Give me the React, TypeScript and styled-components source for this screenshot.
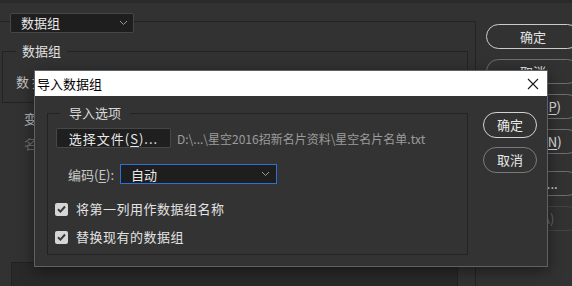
import styled, { createGlobalStyle } from 'styled-components'

const GlobalStyle = createGlobalStyle`
  body {
    margin: 0;
    background: #323232;
    font-family: "Noto Sans CJK SC", "Noto Sans", sans-serif;
  }
`

const Screen = styled.div`
  position: relative;
  width: 572px;
  height: 286px;
  overflow: hidden;
  box-sizing: border-box;
  background: #323232;
  border-top: 3px solid #2a2a2a;
  display: flex;
  gap: 10px;
  font-size: 13px;
  color: #e2e2e2;
`

const OuterFrame = styled.fieldset`
  margin: 6px 0 0 -1px;
  padding: 9px 0 0 2px;
  width: 477px;
  min-width: 0;
  height: 330px;
  flex: none;
  box-sizing: border-box;
  border: 1px solid #232323;
`

const DropLegend = styled.legend`
  margin-left: 8px;
  padding: 4px 0 0;
`

const Dropdown = styled.div`
  width: 124px;
  height: 20px;
  box-sizing: border-box;
  display: flex;
  align-items: center;
  justify-content: space-between;
  padding: 0 5px 0 10px;
  background: #1e1e1e;
  border: 1px solid #464646;
  border-radius: 2px;
  line-height: 18px;
  color: #e8e8e8;
`

const InnerFrame = styled.fieldset`
  margin: 0;
  padding: 13px 0 11px 13px;
  width: 466px;
  min-width: 0;
  box-sizing: border-box;
  border: 1px solid #232323;
`

const TextLegend = styled.legend<{ $pad: number }>`
  padding: 0 ${(p) => p.$pad}px;
  line-height: 18px;
  color: #e0e0e0;
`

const BgRow = styled.div<{ $indent: number; $dim?: boolean; $top?: number }>`
  height: 18px;
  line-height: 18px;
  margin-top: ${(p) => p.$top ?? 0}px;
  padding-left: ${(p) => p.$indent}px;
  color: ${(p) => (p.$dim ? '#6c6c6c' : '#c4c4c4')};
  letter-spacing: 3px;
  white-space: nowrap;
`

const BottomPanel = styled.div`
  margin: 109px 0 0 9px;
  width: 447px;
  height: 60px;
  box-sizing: border-box;
  background: #292929;
  border: 1px solid #222;
`

const SideColumn = styled.div`
  display: flex;
  flex-direction: column;
  gap: 10px;
  padding-top: 21px;
  flex: none;
`

const Pill = styled.div<{ $variant?: 'default' | 'normal' | 'disabled'; $extra?: number }>`
  width: 94px;
  height: 25px;
  box-sizing: border-box;
  margin-top: ${(p) => p.$extra ?? 0}px;
  border-radius: 13px;
  border: 1px solid
    ${(p) => (p.$variant === 'default' ? '#cbcbcb' : p.$variant === 'disabled' ? '#444' : '#6f6f6f')};
  color: ${(p) => (p.$variant === 'disabled' ? '#666' : '#e2e2e2')};
  display: flex;
  align-items: center;
  justify-content: center;
  line-height: 18px;
  white-space: nowrap;
`

const SideText = styled.div`
  margin-top: 2px;
  padding-left: 12px;
  line-height: 18px;
  color: #d0d0d0;
`

const Key = styled.span`
  text-decoration: underline;
  text-underline-offset: 2px;
`

/* dialog */

const Dialog = styled.div`
  position: absolute;
  left: 34px;
  top: 67px;
  width: 514px;
  height: 197px;
  box-sizing: border-box;
  border: 1px solid #5d6267;
  background: #333;
  box-shadow: 0 4px 14px rgba(0, 0, 0, 0.45);
`

const TitleBar = styled.div`
  height: 25px;
  background: #fff;
  color: #000;
  display: flex;
  align-items: center;
  justify-content: space-between;
  padding: 0 8px 0 2px;
  line-height: 18px;
`

const DialogBody = styled.div`
  display: flex;
  gap: 15px;
  padding: 8px 0 0 12px;
`

const OptionsFrame = styled.fieldset`
  margin: 0;
  padding: 6px 8px 0 8px;
  width: 421px;
  height: 151px;
  min-width: 0;
  box-sizing: border-box;
  border: 1px solid #232323;
`

const OptionsLegend = styled.legend`
  margin-left: 4px;
  padding: 0 9px;
  line-height: 18px;
  color: #d8d8d8;
`

const Row = styled.div<{ $top?: number }>`
  display: flex;
  align-items: center;
  margin-top: ${(p) => p.$top ?? 0}px;
`

const FileButton = styled.div`
  width: 115px;
  height: 20px;
  box-sizing: border-box;
  display: flex;
  align-items: center;
  justify-content: center;
  background: #1f1f1f;
  border: 1px solid #474747;
  border-radius: 2px;
  color: #e8e8e8;
  letter-spacing: 1px;
`

const PathText = styled.span`
  margin-left: 6px;
  font-size: 12px;
  color: #9c9c9c;
  white-space: nowrap;
`

const FieldLabel = styled.span`
  width: 52px;
  margin-left: 12px;
  color: #c8c8c8;
  white-space: nowrap;
`

const Select = styled.div`
  width: 157px;
  height: 20px;
  box-sizing: border-box;
  display: flex;
  align-items: center;
  justify-content: space-between;
  padding: 0 6px 0 10px;
  background: #1e1e1e;
  border: 1px solid #2f6fd8;
  color: #e8e8e8;
`

const CheckBox = styled.span`
  width: 13px;
  height: 13px;
  border-radius: 2px;
  background: #d6d6d6;
  display: flex;
  align-items: center;
  justify-content: center;
  margin-right: 8px;
  margin-left: -1px;
`

const CheckLabel = styled.span`
  line-height: 18px;
  color: #e2e2e2;
  letter-spacing: 0.5px;
`

const DialogButtons = styled.div`
  display: flex;
  flex-direction: column;
  gap: 9px;
  padding-top: 8px;
`

const RoundButton = styled.div<{ $primary?: boolean }>`
  width: 54px;
  height: 26px;
  box-sizing: border-box;
  border-radius: 13px;
  border: 1px solid ${(p) => (p.$primary ? '#d2d2d2' : '#7a7a7a')};
  display: flex;
  align-items: center;
  justify-content: center;
  color: #e8e8e8;
  line-height: 18px;
`

const Chevron = () => (
  <svg width="9" height="6" viewBox="0 0 9 6">
    <path d="M1 1l3.5 3.5L8 1" fill="none" stroke="#9a9a9a" strokeWidth="1" />
  </svg>
)

const CloseIcon = () => (
  <svg width="12" height="12" viewBox="0 0 12 12">
    <path d="M1 1l10 10M11 1L1 11" stroke="#1a1a1a" strokeWidth="1.1" />
  </svg>
)

const Check = () => (
  <svg width="9" height="8" viewBox="0 0 9 8">
    <path d="M1 4.2l2.4 2.4L8 1.5" fill="none" stroke="#3a3a3a" strokeWidth="2" />
  </svg>
)

export default function App() {
  return (
    <>
      <GlobalStyle />
      <Screen>
        <OuterFrame>
          <DropLegend>
            <Dropdown>
              数据组
              <Chevron />
            </Dropdown>
          </DropLegend>
          <InnerFrame>
            <TextLegend $pad={6}>数据组</TextLegend>
            <BgRow $indent={0}>数据组(D):</BgRow>
          </InnerFrame>
          <BgRow $indent={22} $top={7}>
            变量(V):
          </BgRow>
          <BgRow $indent={22} $top={7} $dim>
            名称(M):
          </BgRow>
          <BottomPanel />
        </OuterFrame>
        <SideColumn>
          <Pill $variant="default">确定</Pill>
          <Pill>取消</Pill>
          <Pill>
            上一个(<Key>P</Key>)
          </Pill>
          <Pill>
            下一个(<Key>N</Key>)
          </Pill>
          <Pill $extra={7}>导入(I)...</Pill>
          <Pill $variant="disabled">应用(A)</Pill>
          <SideText>预览(V)</SideText>
        </SideColumn>

        <Dialog>
          <TitleBar>
            导入数据组
            <CloseIcon />
          </TitleBar>
          <DialogBody>
            <OptionsFrame>
              <OptionsLegend>导入选项</OptionsLegend>
              <Row>
                <FileButton>
                  选择文件(<Key>S</Key>)...
                </FileButton>
                <PathText>D:\...\星空2016招新名片资料\星空名片名单.txt</PathText>
              </Row>
              <Row $top={16}>
                <FieldLabel>
                  编码(<Key>E</Key>):
                </FieldLabel>
                <Select>
                  自动
                  <Chevron />
                </Select>
              </Row>
              <Row $top={16}>
                <CheckBox>
                  <Check />
                </CheckBox>
                <CheckLabel>将第一列用作数据组名称</CheckLabel>
              </Row>
              <Row $top={10}>
                <CheckBox>
                  <Check />
                </CheckBox>
                <CheckLabel>替换现有的数据组</CheckLabel>
              </Row>
            </OptionsFrame>
            <DialogButtons>
              <RoundButton $primary>确定</RoundButton>
              <RoundButton>取消</RoundButton>
            </DialogButtons>
          </DialogBody>
        </Dialog>
      </Screen>
    </>
  )
}
